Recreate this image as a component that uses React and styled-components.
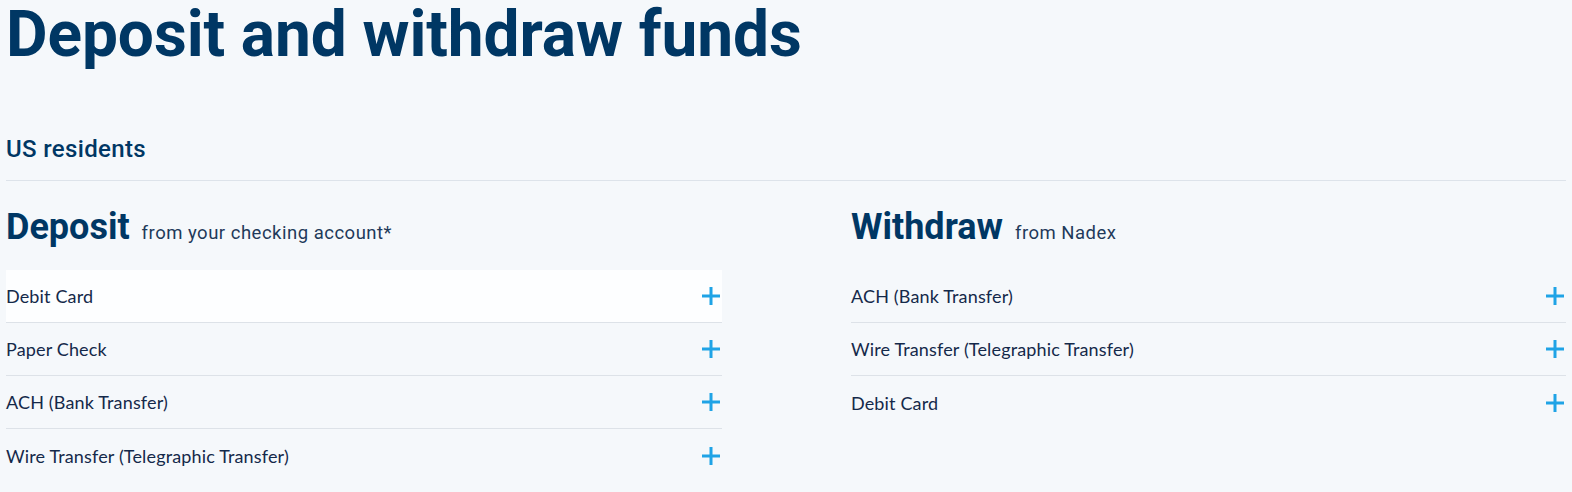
import styled, { createGlobalStyle } from "styled-components";

const GlobalStyle = createGlobalStyle`
  html, body {
    margin: 0;
    padding: 0;
    background: #f5f8fb;
  }
  * {
    box-sizing: border-box;
  }
`;

const deposits = [
  "Debit Card",
  "Paper Check",
  "ACH (Bank Transfer)",
  "Wire Transfer (Telegraphic Transfer)",
];

const withdrawals = [
  "ACH (Bank Transfer)",
  "Wire Transfer (Telegraphic Transfer)",
  "Debit Card",
];

const PlusIcon = () => (
  <svg width="18" height="18" viewBox="0 0 18 18">
    <path d="M9 0v18M0 9h18" stroke="#1fa3e6" strokeWidth="3" fill="none" />
  </svg>
);

const Section = ({ title, note, items, highlightFirst }) => (
  <Column>
    <ColumnHead>
      <ColumnTitle>{title}</ColumnTitle>
      <ColumnNote>{note}</ColumnNote>
    </ColumnHead>
    <List>
      {items.map((item, i) => (
        <Row key={item} $active={highlightFirst && i === 0}>
          <span>{item}</span>
          <PlusIcon />
        </Row>
      ))}
    </List>
  </Column>
);

const App = () => (
  <>
    <GlobalStyle />
    <Page>
      <Title>Deposit and withdraw funds</Title>
      <Region>US residents</Region>
      <Columns>
        <Section
          title="Deposit"
          note="from your checking account*"
          items={deposits}
          highlightFirst
        />
        <Section title="Withdraw" note="from Nadex" items={withdrawals} />
      </Columns>
    </Page>
  </>
);

const Page = styled.div`
  padding: 0 6px;
  color: #003764;
`;

const Title = styled.h1`
  margin: 0;
  padding-top: 2px;
  font-family: Roboto, "Liberation Sans", sans-serif;
  font-weight: 700;
  font-size: 64px;
  line-height: 66px;
  letter-spacing: -0.1px;
  color: #003764;
`;

const Region = styled.h3`
  margin: 0;
  margin-top: 67px;
  padding-bottom: 17px;
  border-bottom: 1px solid #dde3ea;
  font-family: Roboto, "Liberation Sans", sans-serif;
  font-weight: 500;
  font-size: 24px;
  line-height: 28px;
  letter-spacing: 0.35px;
  color: #003764;
`;

const Columns = styled.div`
  display: grid;
  grid-template-columns: 716px 715px;
  justify-content: space-between;
  padding-top: 26px;
`;

const Column = styled.div`
  display: flex;
  flex-direction: column;
`;

const ColumnHead = styled.div`
  display: flex;
  align-items: baseline;
  gap: 12px;
  height: 63px;
`;

const ColumnTitle = styled.h2`
  margin: 0;
  font-family: Roboto, "Liberation Sans", sans-serif;
  font-weight: 700;
  font-size: 36px;
  line-height: 40px;
  color: #003764;
`;

const ColumnNote = styled.span`
  font-family: Roboto, "Liberation Sans", sans-serif;
  font-weight: 400;
  font-size: 18.5px;
  letter-spacing: 0.5px;
  color: #1f3a5a;
`;

const List = styled.div`
  display: flex;
  flex-direction: column;
`;

const Row = styled.div`
  display: flex;
  align-items: center;
  justify-content: space-between;
  height: 53px;
  padding-right: 2px;
  border-bottom: 1px solid #dde2e8;
  background: ${(p) => (p.$active ? "#fdfeff" : "transparent")};
  font-family: Lato, "Liberation Sans", sans-serif;
  font-size: 18px;
  letter-spacing: 0.15px;
  color: #14294a;

  &:last-child {
    border-bottom: none;
  }
`;

export default App;
